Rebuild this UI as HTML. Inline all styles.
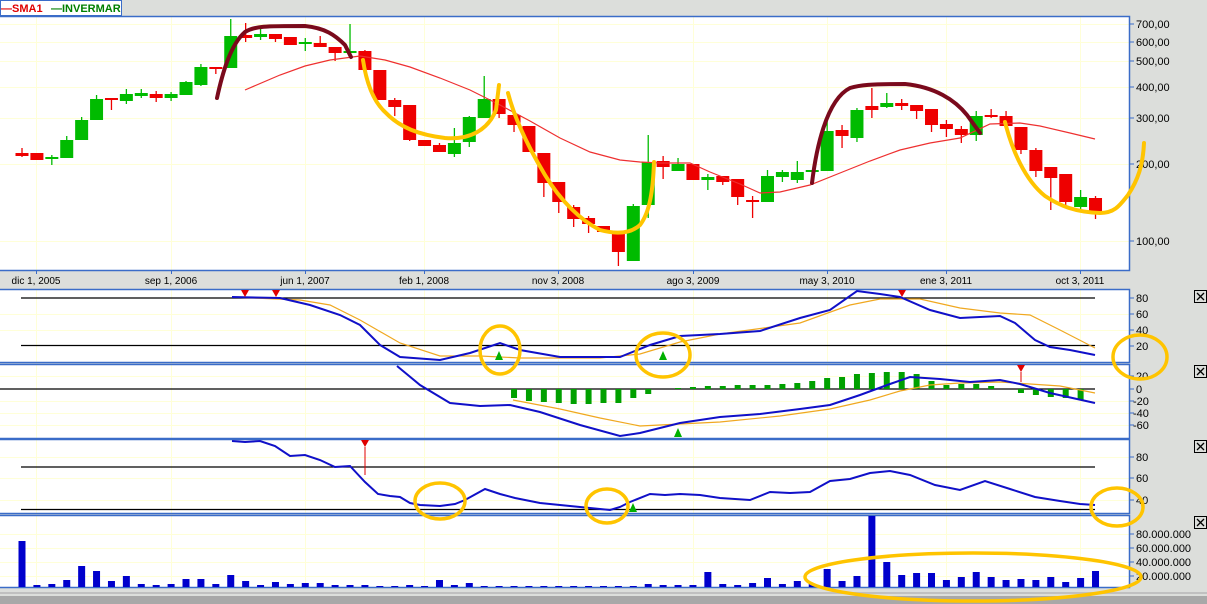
<!DOCTYPE html>
<html><head><meta charset="utf-8"><style>
html,body{margin:0;padding:0;width:1207px;height:604px;overflow:hidden;background:#dcdedb;font-family:"Liberation Sans",sans-serif}
svg{display:block}
</style></head><body>
<svg id="s" width="1207" height="604" xmlns="http://www.w3.org/2000/svg" font-family="Liberation Sans, sans-serif">
<rect x="0" y="0" width="1207" height="604" fill="#dcdedb"/>
<rect x="0" y="596" width="1207" height="8" fill="#a8a8a8"/>
<rect x="0" y="592" width="1207" height="2" fill="#c0c0c0"/>
<rect x="0" y="16" width="1129" height="254" fill="#fff"/>
<rect x="0" y="289" width="1129" height="73" fill="#fff"/>
<rect x="0" y="364" width="1129" height="74" fill="#fff"/>
<rect x="0" y="439" width="1129" height="74" fill="#fff"/>
<rect x="0" y="515" width="1129" height="72" fill="#fff"/>
<g id="grid" stroke="#ffffd8" stroke-width="1"></g>
<g fill="none" stroke="#3a6cc8" stroke-width="1.5">
<path d="M0 16.5H1129.5V270.5H0M0 289.5H1129.5V362.5H0M0 364.5H1129.5V438.5H0M0 439.5H1129.5V513.5H0M0 515.5H1129.5V587.5H0"/>
</g>
<rect x="0.5" y="0.5" width="121" height="15" fill="#fff" stroke="#3a6cc8"/>
<text x="1" y="12" font-size="11" font-weight="bold" fill="#e00000">—SMA1</text>
<text x="51" y="12" font-size="11" font-weight="bold" fill="#008000">—INVERMAR</text>
<g font-size="11" fill="#000">
<text x="1136" y="28">700,00</text><text x="1136" y="46">600,00</text><text x="1136" y="65">500,00</text><text x="1136" y="91">400,00</text><text x="1136" y="122">300,00</text><text x="1136" y="168">200,00</text><text x="1136" y="245">100,00</text>
<text x="1136" y="302">80</text><text x="1136" y="318">60</text><text x="1136" y="334">40</text><text x="1136" y="350">20</text>
<text x="1136" y="380">20</text><text x="1136" y="393">0</text><text x="1133" y="405">-20</text><text x="1133" y="417">-40</text><text x="1133" y="429">-60</text>
<text x="1136" y="461">80</text><text x="1136" y="482">60</text><text x="1136" y="504">40</text>
<text x="1136" y="538">80.000.000</text><text x="1136" y="552">60.000.000</text><text x="1136" y="566">40.000.000</text><text x="1136" y="580">20.000.000</text>
</g>
<g stroke="#3a6cc8"><path d="M1130 24h4M1130 42h4M1130 61h4M1130 87h4M1130 118h4M1130 164h4M1130 241h4M1130 298h4M1130 314h4M1130 330h4M1130 346h4M1130 376h4M1130 389h4M1130 401h4M1130 413h4M1130 425h4M1130 457h4M1130 478h4M1130 500h4M1130 534h4M1130 548h4M1130 562h4M1130 576h4"/></g>
<g font-size="10" fill="#000" text-anchor="middle">
<text x="36" y="284">dic 1, 2005</text><text x="171" y="284">sep 1, 2006</text><text x="305" y="284">jun 1, 2007</text><text x="424" y="284">feb 1, 2008</text><text x="558" y="284">nov 3, 2008</text><text x="693" y="284">ago 3, 2009</text><text x="827" y="284">may 3, 2010</text><text x="946" y="284">ene 3, 2011</text><text x="1080" y="284">oct 3, 2011</text>
</g>
<g id="xb"></g>
<g stroke="#000" stroke-width="1.2"><path d="M21 298H1095M21 345.5H1095M0 389H1095M21 467H1095M21 509.5H1095"/></g>
<g id="dyn"></g>
<polyline fill="none" stroke="#ee3030" stroke-width="1.2" points="245,90 280,75 305,66 330,60 360,56 385,60 410,67 440,78 470,90 500,105 530,121 560,138 590,152 620,160 640,162 660,163 690,163 710,172 740,184 760,193 780,192 810,185 840,173 870,161 900,150 930,143 960,138 990,124 1020,123 1040,126 1070,133 1095,139"/>
<polyline fill="none" stroke="#f0a820" stroke-width="1.2" points="232,297 300,300 330,305 360,320 400,343 440,356 480,356 520,358 600,358 640,354 680,342 720,334 800,323 850,305 880,299 920,299 960,308 1000,313 1030,315 1060,330 1095,348"/>
<polyline fill="none" stroke="#1010c8" stroke-width="2" points="232,297 280,298 310,305 340,315 360,325 380,345 400,357 440,360 470,353 500,343 520,350 560,357 620,357 650,345 680,336 720,334 760,331 800,318 830,310 857,291 880,294 900,297 930,310 960,318 1000,316 1015,323 1035,340 1050,347 1070,350 1095,355"/>
<polyline fill="none" stroke="#f0a820" stroke-width="1.2" points="513,400 560,409 600,418 640,426 680,424 720,422 780,416 830,409 870,400 900,391 930,385 960,383 1000,382 1030,384 1060,386 1095,393"/>
<polyline fill="none" stroke="#1010c8" stroke-width="2" points="397,366 420,385 450,403 480,406 510,405 540,412 580,425 620,436 640,433 680,423 720,417 760,414 800,409 830,405 860,395 890,384 910,377 940,379 970,382 1000,380 1020,384 1050,393 1095,403"/>
<polyline fill="none" stroke="#1010c8" stroke-width="2" points="232,441 245,442 260,441 275,446 290,456 305,455 320,460 335,467 350,466 365,482 378,494 390,496 400,497 410,503 420,505 440,506 455,504 465,500 485,489 500,494 515,498 540,503 580,507 610,510 620,507 630,502 650,494 665,495 680,494 700,495 720,498 750,500 770,492 790,493 810,492 830,481 850,479 870,473 890,471 910,475 935,485 960,490 985,481 1010,489 1035,497 1060,501 1080,504 1095,505"/>
<g fill="#e00000">
<path d="M241 290h8l-4 7z M272 290h8l-4 7z M898 290h8l-4 7z M1017 365h8l-4 7z M361 440h8l-4 7z"/>
</g>
<g stroke="#e00000" stroke-width="1"><path d="M1021 372v10M365 447v28"/></g>
<g fill="#00b000"><path d="M495 360h8l-4 -9z M659 360h8l-4 -9z M674 437h8l-4 -9z M629 512h8l-4 -9z"/></g>
<g fill="none" stroke-width="4" stroke-linecap="round" stroke-linejoin="round">
<path stroke="#7a0a1c" d="M217 98C222 75 230 45 245 32C255 26 265 26 305 26C325 28 335 35 345 45L351 57"/>
<path stroke="#7a0a1c" d="M812 183C816 150 826 100 850 88C860 85 870 84 905 84C935 87 955 100 967 115L980 133"/>
<g stroke="#ffc400">
<path d="M363 60C366 80 372 100 385 112C400 128 420 135 445 138C470 140 488 130 496 110L499 85"/>
<path d="M508 93C515 120 530 150 545 175C560 200 580 220 600 230C615 234 630 234 640 225C650 212 653 190 654 162"/>
<path d="M1005 122C1012 150 1025 180 1045 196C1060 206 1075 212 1100 213C1115 213 1120 205 1128 195C1138 180 1143 165 1144 143"/>
<ellipse cx="500" cy="350" rx="20" ry="24" stroke-width="3.5"/>
<ellipse cx="663" cy="355" rx="27" ry="22" stroke-width="3.5"/>
<ellipse cx="1140" cy="357" rx="27" ry="22" stroke-width="3.5"/>
<ellipse cx="440" cy="501" rx="25" ry="18" stroke-width="3.5"/>
<ellipse cx="607" cy="506" rx="21" ry="17" stroke-width="3.5"/>
<ellipse cx="1117" cy="507" rx="26" ry="19" stroke-width="3.5"/>
<ellipse cx="973" cy="577" rx="168" ry="24" stroke-width="3.5"/>
</g>
</g>
</svg>
<script>
var NS="http://www.w3.org/2000/svg";
function el(p,t,a){var e=document.createElementNS(NS,t);for(var k in a)e.setAttribute(k,a[k]);p.appendChild(e);return e;}
var grid=document.getElementById('grid'),dyn=document.getElementById('dyn'),xb=document.getElementById('xb');
[36,171,305,424,558,693,827,946,1080].forEach(function(x){
 [[17,270],[290,362],[365,438],[440,513],[516,587]].forEach(function(r){el(grid,'line',{x1:x+.5,x2:x+.5,y1:r[0],y2:r[1]});});
 el(grid,'line',{x1:x+.5,x2:x+.5,y1:270,y2:274,stroke:'#3a6cc8'});
});
[24,42,61,87,118,164,241,314,330,376,401,413,425,457,478,500,534,548,562,576].forEach(function(y){el(grid,'line',{x1:0,x2:1129,y1:y+.5,y2:y+.5});});
[290,365,440,516].forEach(function(y){var g=el(xb,'g',{});el(g,'rect',{x:1194.5,y:y+.5,width:12,height:12,fill:'#dcdedb',stroke:'#000'});el(g,'path',{d:'M1197 '+(y+3)+'l7 7m0 -7l-7 7',stroke:'#000','stroke-width':1.3});});
var C=[[153,156,'r',148,157],[153,160,'r',153,160],[157,159,'g',155,165],[140,158,'g',136,158],[120,140,'g',117,140],[99,120,'g',95,120],[98,100,'r',98,110],[94,101,'g',89,104],[93,96,'g',89,98],[94,98,'r',91,102],[94,98,'g',92,101],[82,95,'g',81,95],[67,85,'g',64,86],[67,69,'r',67,74],[36,68,'g',19,68],[35,38,'r',23,42],[34,37,'g',29,40],[34,39,'r',34,42],[37,45,'r',37,45],[42,44,'g',38,51],[43,47,'r',36,47],[47,53,'r',47,61],[51,52,'g',24,52],[51,70,'r',50,70],[70,100,'r',70,100],[100,107,'r',98,116],[105,140,'r',105,141],[140,146,'r',140,146],[145,152,'r',143,152],[143,154,'g',128,157],[117,142,'g',116,147],[99,118,'g',76,118],[99,114,'r',99,118],[115,125,'r',115,132],[126,152,'r',126,152],[153,183,'r',153,197],[182,202,'r',182,213],[207,219,'r',205,227],[218,224,'r',216,233],[226,232,'r',226,232],[233,252,'r',233,266],[206,261,'g',204,261],[162,205,'g',135,218],[161,167,'r',156,179],[164,171,'g',158,171],[164,180,'r',164,180],[177,180,'g',174,190],[176,182,'r',176,185],[179,197,'r',179,205],[200,202,'r',196,218],[176,202,'g',170,202],[172,177,'g',170,182],[172,180,'g',161,183],[170,172,'g',170,185],[131,171,'g',121,171],[130,136,'r',125,148],[110,138,'g',108,142],[106,110,'r',88,118],[103,107,'g',93,108],[103,106,'r',99,110],[105,111,'r',105,119],[109,125,'r',109,132],[124,129,'r',120,137],[129,135,'r',126,143],[116,135,'g',111,141],[115,117,'r',109,118],[116,126,'r',111,129],[127,150,'r',127,154],[150,171,'r',148,177],[167,178,'r',167,210],[174,202,'r',174,208],[197,207,'g',190,211],[198,213,'r',196,219]];
var V=[541,585,584,580,566,571,581,576,584,585,584,579,579,584,575,581,585,582,584,583,583,585,585,585,586,586,585,586,580,585,583,586,586,586,586,586,586,586,586,586,586,586,584,585,585,585,572,584,585,583,578,584,581,584,569,581,576,516,562,575,573,573,580,577,572,577,580,579,580,577,582,578,571];
for(var i=0;i<C.length;i++){var x=22+14.91*i,c=C[i],col=c[2]=='r'?'#ee0000':'#00bb00';
 el(dyn,'line',{x1:x,x2:x,y1:c[3],y2:c[4],stroke:col,'stroke-width':1.3});
 el(dyn,'rect',{x:x-6.5,y:c[0],width:13,height:Math.max(2,c[1]-c[0]),fill:col});
 if(V[i]!==undefined&&V[i]<587)el(dyn,'rect',{x:x-3.5,y:V[i],width:7,height:587-V[i],fill:'#0000cc'});
}
var H={33:398,34:401,35:402,36:403,37:404,38:404,39:403,40:403,41:398,42:394,44:388,45:387,46:386,47:386,48:385,49:385,50:385,51:384,52:383,53:381,54:378,55:377,56:374,57:373,58:372,59:372,60:374,61:381,62:385,63:384,64:384,65:386,67:393,68:395,69:397,70:398,71:400};
for(var k in H){var x=22+14.91*k,y=H[k];el(dyn,'rect',{x:x-3,y:Math.min(y,389),width:6,height:Math.abs(y-389)||1,fill:'#00a000'});}
</script>
</body></html>
